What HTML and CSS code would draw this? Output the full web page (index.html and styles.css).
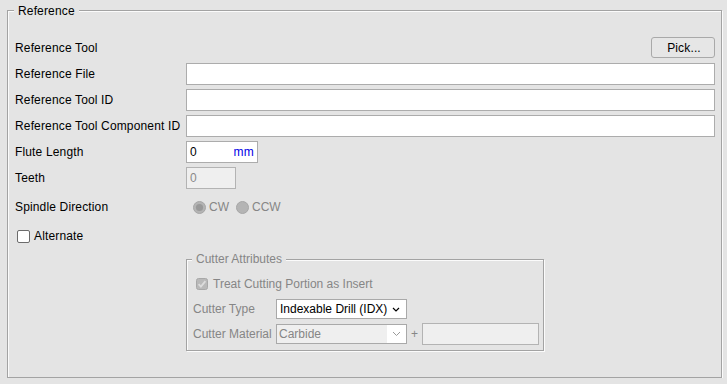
FILE: index.html
```html
<!DOCTYPE html>
<html>
<head>
<meta charset="utf-8">
<link rel="stylesheet" href="styles.css">
</head>
<body>
<div class="group outer">
  <span class="legend">Reference</span>
  <div class="rows">
    <div class="row r22">
      <span class="lbl">Reference Tool</span>
      <div class="ctl end"><button class="btn">Pick...</button></div>
    </div>
    <div class="row r22">
      <span class="lbl">Reference File</span>
      <div class="ctl"><div class="field full"></div></div>
    </div>
    <div class="row r22">
      <span class="lbl">Reference Tool ID</span>
      <div class="ctl"><div class="field full"></div></div>
    </div>
    <div class="row r22">
      <span class="lbl">Reference Tool Component ID</span>
      <div class="ctl"><div class="field full"></div></div>
    </div>
    <div class="row r22">
      <span class="lbl">Flute Length</span>
      <div class="ctl"><div class="field flute"><span>0</span><span class="unit">mm</span></div></div>
    </div>
    <div class="row r22">
      <span class="lbl">Teeth</span>
      <div class="ctl"><div class="field teeth disabled"><span>0</span></div></div>
    </div>
    <div class="row spindle">
      <span class="lbl">Spindle Direction</span>
      <div class="ctl radios">
        <span class="radio">
          <svg width="13" height="13" viewBox="0 0 13 13"><circle cx="6.5" cy="6.5" r="6" fill="#b4b4b4" stroke="#a6a6a6"/><circle cx="6.5" cy="6.5" r="3.6" fill="#999999"/></svg>
          <span class="dis">CW</span>
        </span>
        <span class="radio">
          <svg width="13" height="13" viewBox="0 0 13 13"><circle cx="6.5" cy="6.5" r="6" fill="#b4b4b4" stroke="#a6a6a6"/></svg>
          <span class="dis">CCW</span>
        </span>
      </div>
    </div>
    <div class="row alt">
      <span class="check"></span><span class="lbl">Alternate</span>
    </div>
  </div>
  <div class="inner-wrap">
    <div class="group inner">
      <span class="legend ilegend">Cutter Attributes</span>
      <div class="treat">
        <svg width="12" height="12" viewBox="0 0 12 12"><rect x="0.5" y="0.5" width="11" height="11" rx="2" fill="#b9b9b9" stroke="#a8a8a8"/><path d="M2.6 6.2 L4.9 8.6 L9.4 3.2" fill="none" stroke="#dcdcdc" stroke-width="1.8"/></svg>
        <span class="dis">Treat Cutting Portion as Insert</span>
      </div>
      <div class="irow">
        <span class="ilbl dis">Cutter Type</span>
        <div class="select"><span>Indexable Drill (IDX)</span><svg width="8" height="5" viewBox="0 0 8 5"><path d="M1 1 L4 4 L7 1" fill="none" stroke="#000" stroke-width="1.2"/></svg></div>
      </div>
      <div class="irow">
        <span class="ilbl dis">Cutter Material</span>
        <div class="select combo"><span class="dis">Carbide</span><span class="arrow"><svg width="9" height="6" viewBox="0 0 9 6"><path d="M1 1 L4.5 4.5 L8 1" fill="none" stroke="#9a9a9a" stroke-width="1"/></svg></span></div>
        <span class="plus dis">+</span>
        <div class="field extra disabled"></div>
      </div>
    </div>
  </div>
</div>
</body>
</html>
```

FILE: styles.css
```css
html, body {
  margin: 0;
  padding: 0;
  background: #e4e4e4;
  font-family: "Liberation Sans", Arial, sans-serif;
  font-size: 12px;
  color: #000;
}

.group {
  position: relative;
  border: 1px solid #a3a3a3;
  box-shadow: inset 1px 1px 0 #fbfbfb, 1px 1px 0 #fbfbfb;
}

.outer {
  margin: 10px 0 0 7px;
  width: 713px;
  height: 366px;
  padding: 0;
}

.legend {
  position: absolute;
  top: -6px;
  left: 6px;
  padding: 0 4px;
  background: #e4e4e4;
  line-height: 13px;
  letter-spacing: 0.15px;
}

.rows {
  display: flex;
  flex-direction: column;
  gap: 4px;
  padding: 26px 6px 0 7px;
}

.row {
  display: flex;
  align-items: center;
}

.r22 { height: 22px; }
.spindle { height: 28px; }
.alt { height: 22px; padding-left: 2px; }

.lbl {
  width: 171px;
  flex: none;
  white-space: nowrap;
  letter-spacing: 0.15px;
}

.alt .lbl { width: auto; }

.ctl {
  flex: 1;
  display: flex;
  align-items: center;
}

.end { justify-content: flex-end; align-self: flex-start; }

.btn {
  width: 64px;
  height: 21px;
  border: 1px solid #a9a9a9;
  border-radius: 3px;
  background: #e6e6e6;
  font: inherit;
  font-size: 12px;
  letter-spacing: 0.15px;
  color: #000;
  padding: 0 0 0 2px;
}

.field {
  box-sizing: border-box;
  height: 22px;
  background: #fff;
  border: 1px solid #acacac;
  display: flex;
  align-items: center;
  padding: 0 3px;
}

.full { width: 529px; }

.flute {
  width: 72px;
  justify-content: space-between;
}

.unit { color: #0000e6; letter-spacing: 0.3px; }

.teeth { width: 50px; }

.disabled {
  background: #efefef;
  border-color: #b3b3b3;
  color: #8a8a8a;
}

.dis { color: #868686; }

.radios { gap: 7px; padding-left: 7px; }

.radio {
  display: flex;
  align-items: center;
  gap: 3px;
}

.check {
  box-sizing: border-box;
  width: 13px;
  height: 13px;
  border: 1px solid #6c6c6c;
  border-radius: 2px;
  background: #fff;
  margin-right: 4px;
  flex: none;
}

.inner-wrap {
  padding: 12px 0 0 178px;
}

.inner {
  width: 356px;
  height: 90px;
  box-sizing: content-box;
  padding: 0;
}

.ilegend {
  left: 5px;
  padding: 0 4px;
  color: #868686;
  top: -7px;
  letter-spacing: 0;
}

.treat {
  display: flex;
  align-items: center;
  gap: 5px;
  padding: 18px 0 0 9px;
  height: 12px;
}

.irow {
  display: flex;
  align-items: center;
  padding-left: 6px;
  height: 22px;
}

.treat + .irow { margin-top: 8px; }
.irow + .irow { margin-top: 3px; }

.ilbl { width: 83px; flex: none; white-space: nowrap; }

.select {
  box-sizing: border-box;
  width: 131px;
  height: 20px;
  border: 1px solid #a9a9a9;
  background: #fff;
  display: flex;
  align-items: center;
  justify-content: space-between;
  padding: 0 6px 0 3px;
}

.combo {
  background: #efefef;
  padding: 0 0 0 2px;
}

.combo .arrow {
  width: 19px;
  height: 18px;
  background: #fff;
  display: flex;
  align-items: center;
  justify-content: center;
}

.plus {
  width: 15px;
  text-align: center;
}

.extra {
  width: 117px;
}
```
